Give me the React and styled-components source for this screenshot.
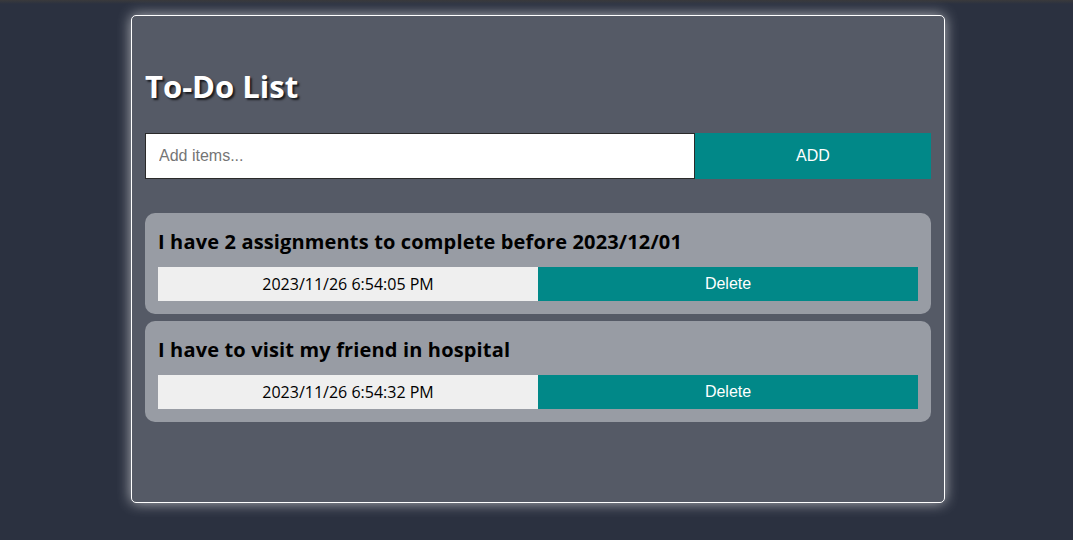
import React from 'react';
import styled, { createGlobalStyle } from 'styled-components';

const GlobalStyle = createGlobalStyle`
  body {
    margin: 0;
    background-color: #2b3140;
    font-family: 'Open Sans', 'Liberation Sans', sans-serif;
  }
`;

const Page = styled.div`
  min-height: 540px;
  box-sizing: border-box;
  padding-top: 15px;
  display: flex;
  justify-content: center;
  background: linear-gradient(to bottom, #3a3a3c 0, #2b3140 4px);
`;

const Card = styled.div`
  width: 814px;
  height: 488px;
  box-sizing: border-box;
  margin-left: 3px;
  padding: 0 13px;
  background-color: #555a66;
  border: 1px solid #ffffff;
  border-radius: 5px;
  box-shadow: 0 0 14px rgba(255, 255, 255, 0.65);
`;

const Title = styled.h1`
  margin: 50px 0 27px;
  font-size: 31px;
  line-height: 40px;
  font-weight: 700;
  color: #ffffff;
  text-shadow: 2px 2px 2px rgba(0, 0, 0, 0.7);
`;

const Form = styled.div`
  display: flex;
  height: 46px;
`;

const Input = styled.input`
  flex: 0 0 550px;
  box-sizing: border-box;
  height: 46px;
  padding: 0 13px;
  border: 1px solid #2a2a2a;
  font-family: 'Liberation Sans', Arial, sans-serif;
  font-size: 16px;
  outline: none;
  &::placeholder {
    color: #757575;
  }
`;

const TealButton = styled.button`
  flex: 1 1 0;
  padding: 0;
  border: none;
  background-color: #018888;
  color: #ffffff;
  font-family: 'Liberation Sans', Arial, sans-serif;
  font-size: 16px;
  cursor: pointer;
`;

const List = styled.div`
  margin-top: 34px;
  display: flex;
  flex-direction: column;
  gap: 7px;
`;

const Item = styled.div`
  background-color: #989ca4;
  border-radius: 10px;
  padding: 14px 13px 13px;
`;

const ItemTitle = styled.h3`
  margin: 0 0 11px;
  font-size: 20px;
  line-height: 29px;
  font-weight: 700;
  letter-spacing: 0.15px;
  color: #000000;
`;

const ItemRow = styled.div`
  display: flex;
  height: 34px;
`;

const Stamp = styled.div`
  flex: 1 1 0;
  display: flex;
  align-items: center;
  justify-content: center;
  background-color: #efefef;
  font-size: 16px;
  color: #000000;
`;

const items = [
  { text: 'I have 2 assignments to complete before 2023/12/01', time: '2023/11/26 6:54:05 PM' },
  { text: 'I have to visit my friend in hospital', time: '2023/11/26 6:54:32 PM' },
];

export default function App() {
  return (
    <>
      <GlobalStyle />
      <Page>
        <Card>
          <Title>To-Do List</Title>
          <Form>
            <Input placeholder="Add items..." />
            <TealButton>ADD</TealButton>
          </Form>
          <List>
            {items.map((it, idx) => (
              <Item key={idx}>
                <ItemTitle>{it.text}</ItemTitle>
                <ItemRow>
                  <Stamp>{it.time}</Stamp>
                  <TealButton>Delete</TealButton>
                </ItemRow>
              </Item>
            ))}
          </List>
        </Card>
      </Page>
    </>
  );
}
